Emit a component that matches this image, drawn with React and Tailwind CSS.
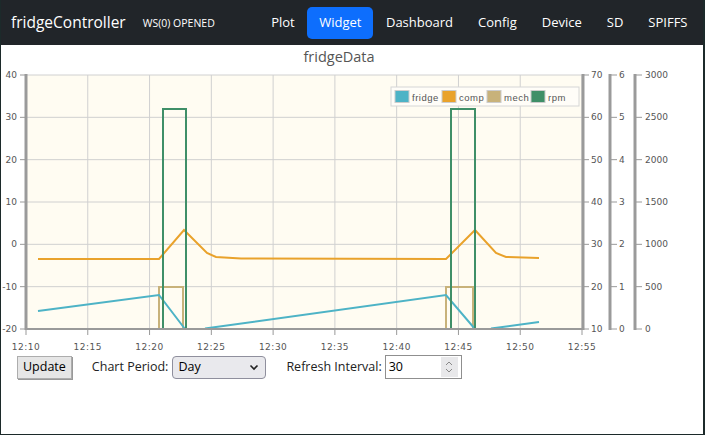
import React from "react";

const navItems = ["Plot", "Widget", "Dashboard", "Config", "Device", "SD", "SPIFFS"];

const X0 = 25;
const X1 = 581;
const Y0 = 75;
const Y1 = 329;
const xTicks = ["12:10", "12:15", "12:20", "12:25", "12:30", "12:35", "12:40", "12:45", "12:50", "12:55"];
const leftTicks = [40, 30, 20, 10, 0, -10, -20];
const axis1 = [70, 60, 50, 40, 30, 20, 10];
const axis2 = [6, 5, 4, 3, 2, 1, 0];
const axis3 = [3000, 2500, 2000, 1500, 1000, 500, 0];

const xs = xTicks.map((_, i) => X0 + (i * (X1 - X0)) / 9);
const ys = leftTicks.map((_, i) => Y0 + (i * (Y1 - Y0)) / 6);

const pts = (a) => a.map((p) => p.join(",")).join(" ");

function FridgeChart() {
  return (
    <svg width="700" height="310" viewBox="0 45 700 310" className="block">
      <text x="338" y="62" textAnchor="middle" fontSize="14.5" fill="#555" fontFamily="Open Sans, sans-serif">
        fridgeData
      </text>
      <rect x={X0} y={Y0} width={X1 - X0} height={Y1 - Y0} fill="#fffcf2" />
      {ys.map((y, i) => (
        <line key={"h" + i} x1={X0} x2={X1} y1={y} y2={y} stroke="#d0d0d0" strokeWidth="1" />
      ))}
      {xs.map((x, i) => (
        <line key={"v" + i} x1={x} x2={x} y1={Y0} y2={Y1} stroke="#d0d0d0" strokeWidth="1" />
      ))}

      {/* comp */}
      <polyline
        fill="none"
        stroke="#e9a22b"
        strokeWidth="2"
        points={pts([[37, 259], [158, 259], [183, 230], [206, 253], [215, 257], [240, 258.5], [445, 259], [474, 230], [495, 253], [505, 257], [538, 258]])}
      />
      {/* mech */}
      <polyline
        fill="none"
        stroke="#c8b27a"
        strokeWidth="2"
        points={pts([[37, 329], [158, 329], [158, 287], [182, 287], [182, 329], [445, 329], [445, 287], [472, 287], [472, 329], [538, 329]])}
      />
      {/* fridge */}
      <polyline fill="none" stroke="#4db3c6" strokeWidth="2" points={pts([[37, 311], [158, 295], [184, 329]])} />
      <polyline fill="none" stroke="#4db3c6" strokeWidth="2" points={pts([[204, 328.5], [445, 295], [474, 329]])} />
      <polyline fill="none" stroke="#4db3c6" strokeWidth="2" points={pts([[490, 328.5], [538, 322]])} />
      {/* rpm */}
      <polyline
        fill="none"
        stroke="#3f8f68"
        strokeWidth="2"
        points={pts([[25, 329], [162, 329], [162, 109], [185, 109], [185, 329], [450, 329], [450, 109], [474, 109], [474, 329], [538, 329]])}
      />

      {/* axes */}
      <line x1={X0} x2={X0} y1={Y0 - 1} y2={Y1 + 1} stroke="#9a9a9a" strokeWidth="3" />
      <line x1={X0} x2={X1} y1={Y1} y2={Y1} stroke="#9a9a9a" strokeWidth="2" />
      <line x1={582} x2={582} y1={Y0 - 1} y2={Y1 + 1} stroke="#9a9a9a" strokeWidth="3" />
      <line x1={609} x2={609} y1={Y0 - 1} y2={Y1 + 1} stroke="#9a9a9a" strokeWidth="3" />
      <line x1={634} x2={634} y1={Y0 - 1} y2={Y1 + 1} stroke="#9a9a9a" strokeWidth="3" />

      <g fontFamily="DejaVu Sans, sans-serif" fontSize="9" fill="#555">
        {leftTicks.map((t, i) => (
          <g key={"l" + t}>
            <line x1={19} x2={25} y1={ys[i]} y2={ys[i]} stroke="#999" />
            <text x="16" y={ys[i] + 3} textAnchor="end">{t}</text>
          </g>
        ))}
        {xTicks.map((t, i) => (
          <g key={"x" + t}>
            <line x1={xs[i]} x2={xs[i]} y1={Y1} y2={Y1 + 6} stroke="#999" />
            <text x={xs[i]} y="350" textAnchor="middle" letterSpacing="0.5">{t}</text>
          </g>
        ))}
        {axis1.map((t, i) => (
          <g key={"a1" + t}>
            <line x1={583} x2={588} y1={ys[i]} y2={ys[i]} stroke="#999" />
            <text x="590" y={ys[i] + 3}>{t}</text>
          </g>
        ))}
        {axis2.map((t, i) => (
          <g key={"a2" + t}>
            <line x1={610} x2={616} y1={ys[i]} y2={ys[i]} stroke="#999" />
            <text x="618" y={ys[i] + 3}>{t}</text>
          </g>
        ))}
        {axis3.map((t, i) => (
          <g key={"a3" + t}>
            <line x1={635} x2={641} y1={ys[i]} y2={ys[i]} stroke="#999" />
            <text x="644" y={ys[i] + 3}>{t}</text>
          </g>
        ))}
      </g>

      {/* legend */}
      <rect x="390" y="87" width="188" height="19" fill="#fffdf8" stroke="#d6d6d6" />
      <g fontFamily="Liberation Sans, sans-serif" fontSize="9.5" fill="#555">
        {[
          ["fridge", "#4db3c6", 394, 411],
          ["comp", "#e9a22b", 441, 458],
          ["mech", "#c8b27a", 486, 503],
          ["rpm", "#3f8f68", 530, 547],
        ].map(([name, c, sx, tx]) => (
          <g key={name}>
            <rect x={sx} y="90.5" width="14" height="12" fill={c} stroke="#ccc" />
            <text x={tx} y="100.5" letterSpacing="0.5">{name}</text>
          </g>
        ))}
      </g>
    </svg>
  );
}

export default function App() {
  return (
    <div className="w-[705px] h-[435px] overflow-hidden bg-white border-l border-r-2 border-b border-[#1c2a2a] font-['Open_Sans',sans-serif]">
      <nav className="h-[45px] bg-[#212529] flex items-center pl-[10px] pr-[3px]">
        <span className="text-white text-[15.5px] leading-none whitespace-nowrap">fridgeController</span>
        <span className="text-white text-[10.5px] ml-[17px] mt-[2px] whitespace-nowrap">WS(0) OPENED</span>
        <div className="ml-auto flex items-center">
          {navItems.map((item) =>
            item === "Widget" ? (
              <span key={item} className="bg-[#0d6efd] text-white text-[13px] rounded-[5px] px-[12px] h-[32px] flex items-center">
                {item}
              </span>
            ) : (
              <span key={item} className="text-white text-[13px] px-[12.5px] whitespace-nowrap">
                {item}
              </span>
            )
          )}
        </div>
      </nav>
      <FridgeChart />
      <div className="flex items-center pl-[16px] text-[12.5px] text-[#222]">
        <button className="h-[23px] px-[5px] bg-[#e6e6e6] border border-[#adadad] shadow-[1px_1px_0_#999] text-[12.5px] text-black">
          Update
        </button>
        <span className="ml-[20px]">Chart Period:</span>
        <div className="ml-[4px] w-[94px] h-[23px] rounded-[4px] border border-[#8f8f9d] bg-[#e9e9ed] flex items-center justify-between pl-[5px] pr-[5px]">
          <span className="text-black">Day</span>
          <svg width="12" height="12" viewBox="0 0 12 12">
            <path d="M2.5 4.5 L6 8 L9.5 4.5" fill="none" stroke="#222" strokeWidth="1.6" />
          </svg>
        </div>
        <span className="ml-[20px]">Refresh Interval:</span>
        <div className="ml-[3px] w-[77px] h-[24px] border border-[#8f8f8f] bg-white flex items-center justify-between pl-[3px] pr-[3px]">
          <span className="text-black">30</span>
          <div className="w-[17px] h-[20px] bg-[#e8e8ea] flex flex-col items-center justify-center">
            <svg width="10" height="16" viewBox="0 0 10 16">
              <path d="M2 6 L5 3 L8 6" fill="none" stroke="#888" strokeWidth="1" />
              <path d="M2 10 L5 13 L8 10" fill="none" stroke="#888" strokeWidth="1" />
            </svg>
          </div>
        </div>
      </div>
    </div>
  );
}
